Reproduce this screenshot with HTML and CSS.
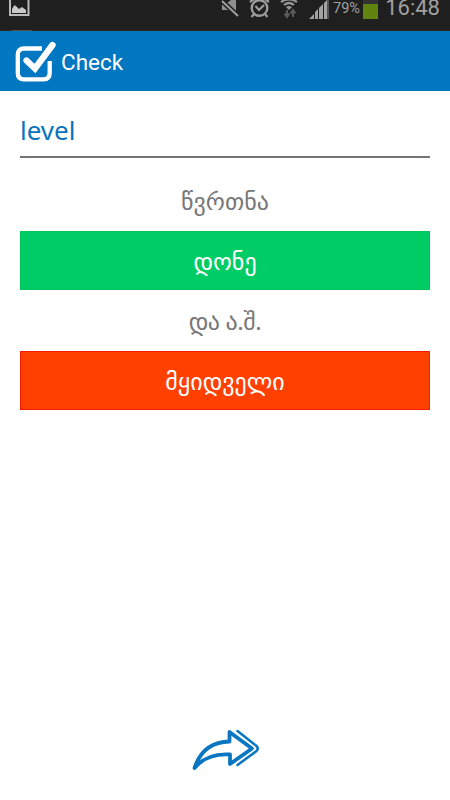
FILE: index.html
```
<!DOCTYPE html>
<html lang="ka">
<head>
    <meta charset="UTF-8">
    <meta name="viewport" content="width=device-width, initial-scale=1.0">
    <title>Check</title>
    <link rel="stylesheet" href="styles.css">
</head>
<body>

    <!-- Status Bar -->
    <div class="status-bar">
        <svg class="picture-icon" width="60" height="31" viewBox="0 0 60 31">
            <path d="M10 -4V15H28.500V-4" fill="none" stroke="#b9b9b9" stroke-width="2"/>
            <path d="M12 13V9L14.500 5L17 7L19 9L22 7L26 10V13Z" fill="#c8c8c8"/>
            <path d="M12 30.500H32" stroke="#575049" stroke-width="1"/>
        </svg>
        <div class="status-right">
            <svg width="112" height="31" viewBox="220 0 112 31">
                <!-- Mute -->
                <path d="M222 3H227L236 -4V13L227 10H222Z" fill="#8f8f8f"/>
                <path d="M221 0L238 16" stroke="#1f1f1f" stroke-width="5"/>
                <path d="M222 1L238 16" stroke="#a0a0a0" stroke-width="2"/>
                <!-- Alarm -->
                <circle cx="259.500" cy="8" r="7.800" fill="none" stroke="#9c9c9c" stroke-width="2.400"/>
                <path d="M255.500 6L259 10L264 5M254 14L251.500 17M265 14L267.500 17M250 2L254 -1M265 -1L269 2" fill="none" stroke="#9c9c9c" stroke-width="2.200"/>
                <!-- Wifi -->
                <path d="M281 2Q289 -3 297 2M284 5Q289 1 294 5" fill="none" stroke="#969696" stroke-width="2.200"/>
                <path d="M286 7Q289 5 292 7L289 10Z" fill="#969696"/>
                <path d="M287 10V16M284.500 13.500L287 17L289.500 13.500M293 17V11M290.500 13.500L293 10L295.500 13.500" fill="none" stroke="#5b5b5b" stroke-width="2"/>
                <!-- Signal -->
                <path d="M309 19L314 14V19ZM315 19V12L318 9V19ZM319 19V8L323 4V19ZM324 19V3L327 0V19Z" fill="#a2a2a2"/>
                <path d="M327 0H329V19H327Z" fill="#555"/>
            </svg>
            <span class="percent">79%</span>
            <div class="battery"></div>
            <span class="time">16:48</span>
        </div>
    </div>

    <!-- Header -->
    <div class="header">
        <svg width="43" height="44" viewBox="0 0 43 44">
            <path d="M27 8.500H9Q2.800 8.500 2.800 14.500V33Q2.800 39.300 9 39.300H28.500Q34.700 39.300 34.700 33V21" fill="none" stroke="#fff" stroke-width="4.300"/>
            <path d="M12 21L20.500 29L40 2" fill="none" stroke="#0077c0" stroke-width="10"/>
            <path d="M11.500 20.500L20 28.500L37.500 5" fill="none" stroke="#fff" stroke-width="6.300" stroke-linecap="round"/>
        </svg>
        <h1>Check</h1>
    </div>

    <!-- Word and Answers -->
    <div class="content">
        <div class="word">level</div>
        <div class="answer">წვრთნა</div>
        <div class="answer correct">დონე</div>
        <div class="answer phrase">და ა.შ.</div>
        <div class="answer wrong">მყიდველი</div>
    </div>

    <!-- Next Button -->
    <div class="next-btn">
        <svg width="70" height="44" viewBox="190 728 70 44">
            <path d="M194.500 768Q203 742 229.500 741.500V732L252 748.500L230 764V754.500Q207 753 194.500 768Z" fill="none" stroke="#0a76c2" stroke-width="3.800" stroke-linejoin="round"/>
            <path d="M237.500 731L256.500 746Q259 748.500 256.500 751L237.500 765" fill="none" stroke="#0a76c2" stroke-width="2.500" stroke-linecap="round"/>
        </svg>
    </div>

</body>
</html>
```
FILE: styles.css
```
* {
    margin: 0;
    padding: 0;
    box-sizing: border-box;
}
body {
    background-color: #fff;
    height: 100vh;
    display: flex;
    flex-direction: column;
    overflow: hidden;
    font-family: "Noto Sans", "DejaVu Sans", sans-serif;
}
.status-bar {
    height: 31px;
    background-color: #1f1f1f;
    display: flex;
    justify-content: space-between;
    border-bottom: 1px solid #30241c;
}
.status-right {
    display: flex;
    align-items: flex-start;
    padding-right: 10px;
    font-family: Roboto, sans-serif;
    color: #a0a0a0;
}
.percent {
    width: 31px;
    padding-left: 1px;
    font-size: 14.5px;
    line-height: 17px;
}
.battery {
    width: 15px;
    height: 19px;
    border-top: 4px solid #333;
    background-color: #61830f;
}
.time {
    width: 62px;
    text-align: right;
    font-size: 22px;
    line-height: 16px;
}
.header {
    height: 60px;
    background-color: #0077c0;
    display: flex;
    align-items: center;
    gap: 3px;
    padding: 2px 0 0 15px;
    color: #fff;
}
.header h1 {
    font-family: Roboto, sans-serif;
    font-size: 22.5px;
    font-weight: 400;
}
.content {
    flex: 1;
    padding: 12px 20px 0;
}
.word {
    height: 55px;
    margin-bottom: 13px;
    border-bottom: 2px solid #777375;
    color: #0a73bb;
    font-size: 26px;
    line-height: 54px;
}
.answer {
    height: 59px;
    margin-bottom: 1px;
    color: #777;
    font-size: 24px;
    line-height: 60px;
    text-align: center;
}
.phrase {
    letter-spacing: -0.4px;
}
.correct,
.wrong {
    color: #fff;
    line-height: 58px;
}
.correct {
    background-color: #00cc66;
    border: 1px solid #00c45c;
}
.wrong {
    background-color: #ff4000;
    border: 1px solid #f61a00;
}
.next-btn {
    height: 72px;
    padding-left: 190px;
}
```
